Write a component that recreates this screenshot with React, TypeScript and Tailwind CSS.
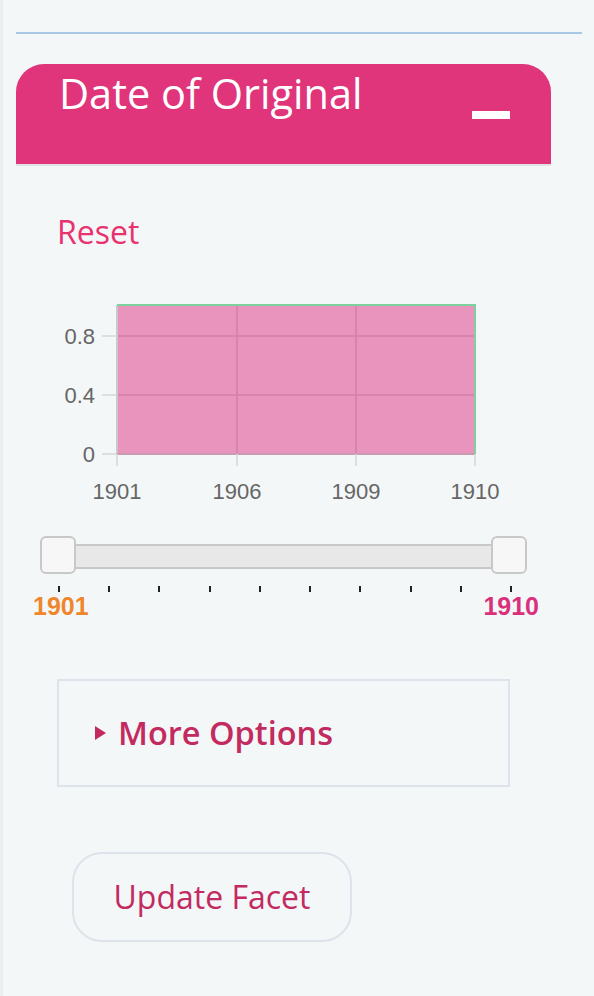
import React from 'react';

const sans = { fontFamily: '"Open Sans", "Noto Sans", sans-serif' };
const arial = '"Liberation Sans", Arial, sans-serif';

function Chart() {
  // plot area in svg coordinates
  const left = 101;
  const right = 459;
  const top = 10;
  const bottom = 159;
  const xTicks = [
    { x: 101, label: '1901' },
    { x: 221, label: '1906' },
    { x: 340, label: '1909' },
    { x: 459, label: '1910' },
  ];
  const yTicks = [
    { y: 41, label: '0.8' },
    { y: 100, label: '0.4' },
    { y: 159, label: '0' },
  ];

  return (
    <svg width="520" height="215" viewBox="0 0 520 215" className="block">
      <rect x={left} y={top} width={right - left} height={bottom - top} fill="#e994bd" />

      {/* grid */}
      {xTicks.slice(1, 3).map((t) => (
        <line key={t.label} x1={t.x} x2={t.x} y1={top} y2={bottom} stroke="#d47fa8" strokeWidth="1.5" />
      ))}
      {yTicks.slice(0, 2).map((t) => (
        <line key={t.label} x1={left} x2={right} y1={t.y} y2={t.y} stroke="#d47fa8" strokeWidth="1.5" />
      ))}

      {/* axes */}
      <line x1={left} x2={left} y1={top} y2={bottom} stroke="#c9c9c9" strokeWidth="2" />
      <line x1={left} x2={right} y1={bottom} y2={bottom} stroke="#c99ab0" strokeWidth="2" />
      <line x1={left} x2={right + 1} y1={top} y2={top} stroke="#7fd19f" strokeWidth="2" />
      <line x1={right} x2={right} y1={top} y2={bottom} stroke="#7fd19f" strokeWidth="2" />

      {yTicks.map((t) => (
        <g key={t.label}>
          <line x1={86} x2={left} y1={t.y} y2={t.y} stroke="#d6d6d6" strokeWidth="1.5" />
          <text x={79} y={t.y + 8} textAnchor="end" fontFamily={arial} fontSize="22" fill="#666">
            {t.label}
          </text>
        </g>
      ))}

      {xTicks.map((t) => (
        <g key={t.label}>
          <line x1={t.x} x2={t.x} y1={bottom} y2={171} stroke="#d6d6d6" strokeWidth="1.5" />
          <text x={t.x} y={204} textAnchor="middle" fontFamily={arial} fontSize="22" fill="#666">
            {t.label}
          </text>
        </g>
      ))}
    </svg>
  );
}

function RangeSlider() {
  return (
    <div className="ml-[24px] w-[487px]">
      <div className="relative h-[38px]">
        <div className="absolute left-[20px] right-[20px] top-[8px] h-[25px] border-2 border-[#c8c8c8] bg-[#e8e8e8]" />
        <div className="absolute left-0 top-0 h-[38px] w-[36px] rounded-[6px] border-2 border-[#c8c8c8] bg-[#f7f7f7]" />
        <div className="absolute right-0 top-0 h-[38px] w-[36px] rounded-[6px] border-2 border-[#c8c8c8] bg-[#f7f7f7]" />
      </div>
    </div>
  );
}

export default function App() {
  return (
    <div className="min-h-[996px] w-[594px] border-l-[3px] border-[#eaeef0] bg-[#f4f7f8]" style={sans}>
      <div className="pl-[13px] pt-[32px]">

        {/* Divider */}
        <div className="h-[2px] w-[566px] bg-[#a9c8e6]" />

        {/* Facet header */}
        <div className="mt-[30px] flex h-[102px] w-[535px] rounded-t-[28px] border-b-2 border-[#dfe3e6] bg-[#e0357a]">
          <h2 className="pl-[43px] pt-[5px] text-[41.5px] leading-[48px] font-normal text-white">
            Date of Original
          </h2>
          <div className="ml-auto mr-[41px] mt-[47px] h-[8px] w-[38px] bg-white" />
        </div>

        {/* Reset */}
        <div className="mt-[46px] pl-[41px]">
          <a className="text-[32px] leading-[40px] text-[#e8336f]">Reset</a>
        </div>

        {/* Chart */}
        <div className="mt-[43px]">
          <Chart />
        </div>

        {/* Slider */}
        <div className="mt-[26px]">
          <RangeSlider />
          <div className="ml-[42px] mt-[12px] flex w-[454px] justify-between">
            {Array.from({ length: 10 }).map((_, i) => (
              <div key={i} className="h-[6px] w-[2px] bg-[#222]" />
            ))}
          </div>
          <div
            className="ml-[17px] mt-[1px] flex w-[506px] justify-between text-[25px] leading-[26px] font-bold"
            style={{ fontFamily: arial }}
          >
            <span className="text-[#f0862c]">1901</span>
            <span className="text-[#d9307c]">1910</span>
          </div>
        </div>

        {/* More options */}
        <div className="ml-[41px] mt-[60px] flex h-[108px] w-[453px] items-center border-2 border-[#dde3ea] pl-[36px]">
          <span className="mr-[12px] h-0 w-0 border-y-[7px] border-l-[11px] border-y-transparent border-l-[#c22a60]" />
          <span className="text-[32.5px] leading-[40px] font-semibold text-[#c22a60]">More Options</span>
        </div>

        {/* Update */}
        <button className="ml-[56px] mt-[65px] flex h-[90px] w-[280px] items-center justify-center rounded-[30px] border-2 border-[#dde3ea] text-[32px] text-[#c22a60]">
          Update Facet
        </button>

      </div>
    </div>
  );
}
